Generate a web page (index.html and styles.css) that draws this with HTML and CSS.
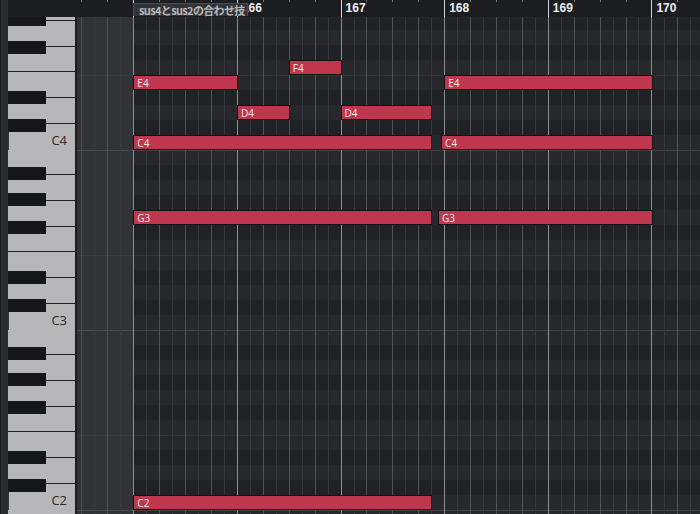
FILE: index.html
```html
<!DOCTYPE html>
<html>
<head>
<meta charset="utf-8">
<link rel="stylesheet" href="styles.css">
</head>
<body>
<div class="app">
  <div class="edge"></div>
  <div class="corner"></div>
  <div class="ruler">
    <div class="rspace"></div>
    <div class="qt"></div><div class="qt"></div>
    <div class="bar"></div><div class="qt"></div><div class="qt"></div><div class="qt"></div>
    <div class="bar"><span class="num hid">166</span></div><div class="qt"></div><div class="qt"></div><div class="qt"></div>
    <div class="bar"><span class="num">167</span></div><div class="qt"></div><div class="qt"></div><div class="qt"></div>
    <div class="bar"><span class="num">168</span></div><div class="qt"></div><div class="qt"></div><div class="qt"></div>
    <div class="bar"><span class="num">169</span></div><div class="qt"></div><div class="qt"></div><div class="qt"></div>
    <div class="bar"><span class="num">170</span></div><div class="qt"></div><div class="qt"></div><div class="qt"></div>
    <div class="title">sus4とsus2の合わせ技</div>
  </div>

  <div class="keys">
    <div class="keys-inner">
      <div class="octave">
        <div class="wk"></div><div class="wk"></div><div class="wk"></div><div class="wk"></div><div class="wk"></div><div class="wk"></div><div class="wk c">C4</div>
        <div class="bk as"></div><div class="bk gs"></div><div class="bk fs"></div><div class="bk ds"></div><div class="bk cs"></div>
      </div>
      <div class="octave">
        <div class="wk"></div><div class="wk"></div><div class="wk"></div><div class="wk"></div><div class="wk"></div><div class="wk"></div><div class="wk c">C3</div>
        <div class="bk as"></div><div class="bk gs"></div><div class="bk fs"></div><div class="bk ds"></div><div class="bk cs"></div>
      </div>
      <div class="octave">
        <div class="wk"></div><div class="wk"></div><div class="wk"></div><div class="wk"></div><div class="wk"></div><div class="wk"></div><div class="wk c">C2</div>
        <div class="bk as"></div><div class="bk gs"></div><div class="bk fs"></div><div class="bk ds"></div><div class="bk cs"></div>
      </div>
      <div class="octave">
        <div class="wk"></div><div class="wk"></div><div class="wk"></div><div class="wk"></div><div class="wk"></div><div class="wk"></div><div class="wk"></div>
        <div class="bk as"></div><div class="bk gs"></div><div class="bk fs"></div><div class="bk ds"></div><div class="bk cs"></div>
      </div>
    </div>
  </div>
  <div class="strip"></div>

  <div class="roll">
    <div class="rows">
      <div class="row bl"><div class="pre"></div><div class="cell"></div></div>
      <div class="row"><div class="pre"></div><div class="cell"></div></div>
      <div class="row bl"><div class="pre"></div><div class="cell"></div></div>
      <div class="row"><div class="pre"></div><div class="cell"></div></div>
      <div class="row ef"><div class="pre"></div><div class="cell"></div></div>
      <div class="row bl"><div class="pre"></div><div class="cell"></div></div>
      <div class="row"><div class="pre"></div><div class="cell"></div></div>
      <div class="row bl"><div class="pre"></div><div class="cell"></div></div>
      <div class="row"><div class="pre"></div><div class="cell"></div></div>
      <div class="row oc"><div class="pre"></div><div class="cell"></div></div>
      <div class="row bl"><div class="pre"></div><div class="cell"></div></div>
      <div class="row"><div class="pre"></div><div class="cell"></div></div>
      <div class="row bl"><div class="pre"></div><div class="cell"></div></div>
      <div class="row"><div class="pre"></div><div class="cell"></div></div>
      <div class="row bl"><div class="pre"></div><div class="cell"></div></div>
      <div class="row"><div class="pre"></div><div class="cell"></div></div>
      <div class="row ef"><div class="pre"></div><div class="cell"></div></div>
      <div class="row bl"><div class="pre"></div><div class="cell"></div></div>
      <div class="row"><div class="pre"></div><div class="cell"></div></div>
      <div class="row bl"><div class="pre"></div><div class="cell"></div></div>
      <div class="row"><div class="pre"></div><div class="cell"></div></div>
      <div class="row oc"><div class="pre"></div><div class="cell"></div></div>
      <div class="row bl"><div class="pre"></div><div class="cell"></div></div>
      <div class="row"><div class="pre"></div><div class="cell"></div></div>
      <div class="row bl"><div class="pre"></div><div class="cell"></div></div>
      <div class="row"><div class="pre"></div><div class="cell"></div></div>
      <div class="row bl"><div class="pre"></div><div class="cell"></div></div>
      <div class="row"><div class="pre"></div><div class="cell"></div></div>
      <div class="row ef"><div class="pre"></div><div class="cell"></div></div>
      <div class="row bl"><div class="pre"></div><div class="cell"></div></div>
      <div class="row"><div class="pre"></div><div class="cell"></div></div>
      <div class="row bl"><div class="pre"></div><div class="cell"></div></div>
      <div class="row"><div class="pre"></div><div class="cell"></div></div>
      <div class="row oc"><div class="pre"></div><div class="cell"></div></div>
    </div>

    <div class="cols">
      <div class="cspace"></div>
      <div class="c q"></div><div class="c"></div><div class="c q"></div><div class="c"></div>
      <div class="c b"></div><div class="c"></div><div class="c q"></div><div class="c"></div><div class="c q"></div><div class="c"></div><div class="c q"></div><div class="c"></div>
      <div class="c b"></div><div class="c"></div><div class="c q"></div><div class="c"></div><div class="c q"></div><div class="c"></div><div class="c q"></div><div class="c"></div>
      <div class="c b"></div><div class="c"></div><div class="c q"></div><div class="c"></div><div class="c q"></div><div class="c"></div><div class="c q"></div><div class="c"></div>
      <div class="c b"></div><div class="c"></div><div class="c q"></div><div class="c"></div><div class="c q"></div><div class="c"></div><div class="c q"></div><div class="c"></div>
      <div class="c b"></div><div class="c"></div><div class="c q"></div><div class="c"></div><div class="c q"></div><div class="c"></div><div class="c q"></div><div class="c"></div>
      <div class="c b"></div><div class="c"></div><div class="c q"></div><div class="c"></div>
    </div>

    <div class="notes">
      <div class="note" style="left:211.79px;top:43px;width:52.82px">F4</div>
      <div class="note" style="left:56.33px;top:58px;width:104.64px">E4</div>
      <div class="note" style="left:367.25px;top:58px;width:208.28px">E4</div>
      <div class="note" style="left:159.97px;top:88px;width:52.82px">D4</div>
      <div class="note" style="left:263.61px;top:88px;width:91.69px">D4</div>
      <div class="note" style="left:56.33px;top:118px;width:298.97px">C4</div>
      <div class="note" style="left:364px;top:118px;width:211.53px">C4</div>
      <div class="note" style="left:56.33px;top:193px;width:298.97px">G3</div>
      <div class="note" style="left:361px;top:193px;width:214.53px">G3</div>
      <div class="note" style="left:56.33px;top:478px;width:298.97px">C2</div>
    </div>
  </div>
</div>
</body>
</html>
```
FILE: styles.css
```css
* { box-sizing: border-box; }

html, body {
  margin: 0;
  padding: 0;
  background: #1c1d20;
}

.app {
  width: 700px;
  height: 514px;
  overflow: hidden;
  display: grid;
  grid-template-columns: 8px 67px 2px 623px;
  grid-template-rows: 17px 497px;
}

.edge {
  grid-column: 1;
  grid-row: 1 / 3;
  background: #2b2c2f;
  border-left: 1px solid #1b1c1e;
}

.corner {
  grid-column: 2 / 4;
  grid-row: 1;
  background: #1c1d20;
}

/* ruler */
.ruler {
  grid-column: 4;
  grid-row: 1;
  position: relative;
  display: flex;
  background: #1c1d20;
  overflow: hidden;
}

.rspace {
  flex: 0 0 4.49px;
}

.qt, .bar {
  flex: 0 0 25.91px;
  height: 17px;
}

.qt {
  background: linear-gradient(#77787b, #77787b) no-repeat left top / 1px 2px;
}

.bar {
  border-left: 1px solid #d6d6d6;
  padding-left: 4px;
  white-space: nowrap;
  font: bold 12px/17px "Liberation Sans", Arial, sans-serif;
  color: #eeeeee;
}

/* bar 166's number is partly covered by the part title; only its tail shows */
.num.hid {
  display: inline-block;
  padding-left: 6px;
  margin-left: -6px;
  width: 26px;
  clip-path: inset(0 0 0 6px);
}

.title {
  position: absolute;
  left: 56px;
  top: 3px;
  width: 115px;
  height: 13px;
  background: #313336;
  border: 1px solid #4a4c50;
  border-bottom: 0;
  color: #b8b8b8;
  font: bold 11px/12px "Noto Sans CJK JP", "Liberation Sans", sans-serif;
  letter-spacing: -0.65px;
  padding-left: 5px;
  white-space: nowrap;
}

/* keyboard */
.keys {
  grid-column: 2;
  grid-row: 2;
  overflow: hidden;
  background: #b7b7b9;
}

.keys-inner {
  margin-top: -47.5px;
}

.octave {
  position: relative;
  height: 180px;
}

.wk {
  height: 25.714px;
  border-bottom: 1px solid #1e1e1f;
  background: #b7b7b9;
}

.wk.c {
  text-align: right;
  padding: 10.5px 8px 0 0;
  font: 13px/13px "Open Sans", "Noto Sans", sans-serif;
  color: #2b2b2b;
}

.bk {
  position: absolute;
  left: 0;
  width: 38px;
  height: 13.7px;
  background: #161718;
}

.bk.as { top: 17.3px; }
.bk.gs { top: 43.3px; }
.bk.fs { top: 71.3px; }
.bk.ds { top: 121.3px; }
.bk.cs { top: 149.3px; }

.strip {
  grid-column: 3;
  grid-row: 2;
  background: #1d1e20;
}

/* roll */
.roll {
  grid-column: 4;
  grid-row: 2;
  display: grid;
  overflow: hidden;
  background: #25272a;
}

.rows, .cols, .notes {
  grid-area: 1 / 1;
}

.rows {
  margin-top: -2px;
  display: flex;
  flex-direction: column;
}

.row {
  flex: 0 0 15px;
  height: 15px;
  display: flex;
}

.row .pre {
  flex: 0 0 56.33px;
  background: #323336;
}

.row .cell {
  flex: 1;
  background: #26282b;
}

.row.bl .cell {
  background: #202225;
}

.row.oc .pre { border-top: 1px solid #4a4b4e; }
.row.oc .cell { border-top: 1px solid #3f4144; }
.row.ef .pre { border-top: 1px solid #3a3b3e; }
.row.ef .cell { border-top: 1px solid #323438; }

.cols {
  display: flex;
  height: 497px;
}

.cspace {
  flex: 0 0 4.49px;
}

.c {
  flex: 0 0 12.955px;
  height: 100%;
  border-left: 1px solid #36383b;
}

.c.q {
  border-left-color: #505255;
}

.c.b {
  border-left-color: #8c8d90;
}

.notes {
  position: relative;
}

.note {
  position: absolute;
  height: 15px;
  background: #be374e;
  border: 1px solid #111111;
  color: #f6e8ea;
  font: 10px/1 "Open Sans", "Noto Sans", sans-serif;
  padding-left: 3px;
  display: flex;
  align-items: center;
  white-space: nowrap;
  overflow: hidden;
}
```
